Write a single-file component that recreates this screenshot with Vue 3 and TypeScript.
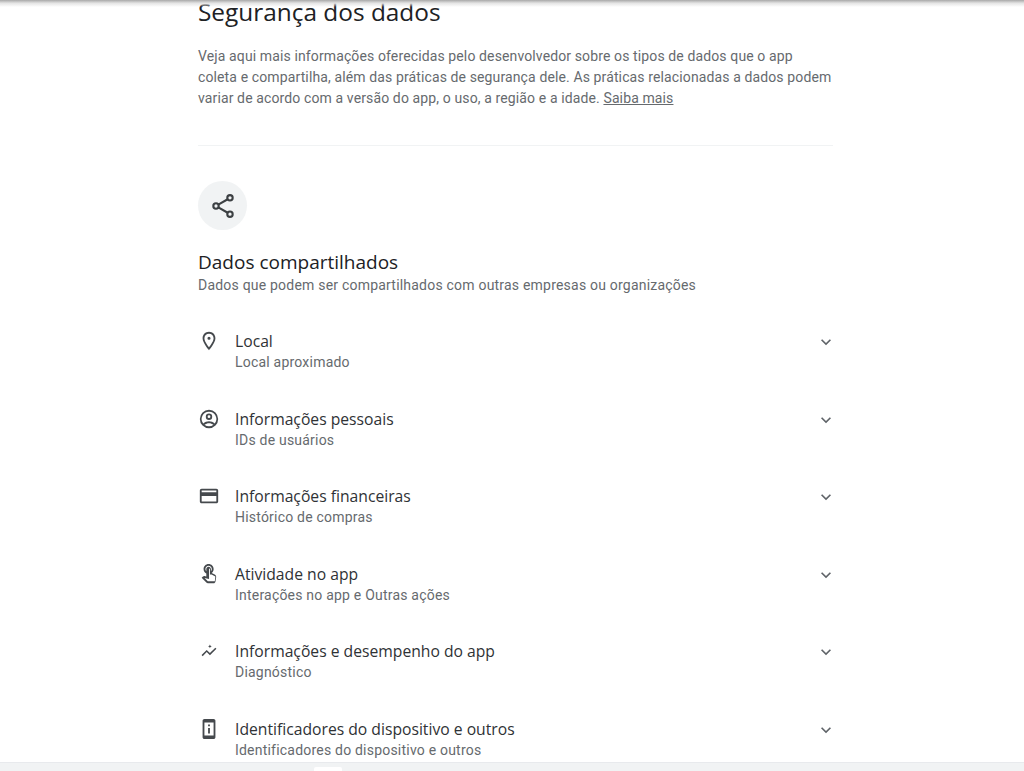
<template>
  <div class="page">
    <div class="top-shadow"></div>
    <section class="content">
      <h1>Segurança dos dados</h1>
      <p class="intro">
        Veja aqui mais informações oferecidas pelo desenvolvedor sobre os tipos de dados que o app
        coleta e compartilha, além das práticas de segurança dele. As práticas relacionadas a dados podem
        variar de acordo com a versão do app, o uso, a região e a idade. <a>Saiba mais</a>
      </p>
      <hr />
      <div class="share-badge">
        <svg width="28" height="28" viewBox="0 0 24 24" fill="none" stroke="#3c4043" stroke-width="1.800">
          <circle cx="18" cy="5" r="2.300" />
          <circle cx="6" cy="12" r="2.300" />
          <circle cx="18" cy="19" r="2.300" />
          <path d="M8 10.800 16 6.200M8 13.200 16 17.800" />
        </svg>
      </div>
      <h2>Dados compartilhados</h2>
      <p class="lead">Dados que podem ser compartilhados com outras empresas ou organizações</p>
      <ul class="rows">
        <li v-for="row in rows" :key="row.title" class="row">
          <svg class="icon" width="22" height="22" viewBox="0 0 24 24" fill="#45494d">
            <path :d="row.icon" />
          </svg>
          <div class="texts">
            <div class="title">{{ row.title }}</div>
            <div class="sub">{{ row.sub }}</div>
          </div>
          <svg class="chevron" width="20" height="20" viewBox="0 0 24 24" fill="#5f6368">
            <path d="M7.410 8.590 12 13.170l4.590-4.580L18 10l-6 6-6-6z" />
          </svg>
        </li>
      </ul>
    </section>
    <div class="bottom-bar"><span class="tab"></span></div>
  </div>
</template>

<script setup lang="ts">
interface Row {
  title: string;
  sub: string;
  icon: string;
}

const rows: Row[] = [
  {
    title: 'Local',
    sub: 'Local aproximado',
    icon: 'M12 2C8.100 2 5 5.100 5 9c0 5.200 7 13 7 13s7-7.800 7-13c0-3.900-3.100-7-7-7zm0 2c2.800 0 5 2.200 5 5 0 2.900-2.900 7.200-5 9.900C9.900 16.200 7 11.900 7 9c0-2.800 2.200-5 5-5zm0 3.300a1.700 1.700 0 1 0 0 3.400 1.700 1.700 0 0 0 0-3.400z',
  },
  {
    title: 'Informações pessoais',
    sub: 'IDs de usuários',
    icon: 'M12 2a10 10 0 1 0 0 20 10 10 0 0 0 0-20zm0 2a8 8 0 0 1 6.300 12.900C16.500 15.300 14.300 14.500 12 14.500s-4.500.8-6.300 2.400A8 8 0 0 1 12 4zm0 2a3.500 3.500 0 1 0 0 7 3.500 3.500 0 0 0 0-7zm0 2a1.500 1.500 0 1 1 0 3 1.500 1.500 0 0 1 0-3zm0 8.500c1.800 0 3.500.6 4.900 1.800A8 8 0 0 1 12 20a8 8 0 0 1-4.900-1.700c1.400-1.200 3.100-1.800 4.900-1.800z',
  },
  {
    title: 'Informações financeiras',
    sub: 'Histórico de compras',
    icon: 'M20 4H4c-1.100 0-2 .9-2 2v12c0 1.100.9 2 2 2h16c1.100 0 2-.9 2-2V6c0-1.100-.9-2-2-2zm0 14H4v-6h16v6zm0-10H4V6h16v2z',
  },
  {
    title: 'Atividade no app',
    sub: 'Interações no app e Outras ações',
    icon: 'M18.190 12.440l-3.240-1.620c1.290-1 2.120-2.560 2.120-4.320C17.070 3.470 14.600 1 11.570 1S6.070 3.470 6.070 6.500c0 2.130 1.220 3.980 3 4.890v3.260c-2.150-.46-2.020-.44-2.260-.44-.53 0-1.030.21-1.410.59L4 16.220l5.090 5.090C9.520 21.750 10.120 22 10.740 22h6.300c.98 0 1.810-.7 1.970-1.670l.8-4.710c.22-1.300-.43-2.580-1.620-3.180zm-.35 7.560h-7.100l-3.600-3.600 4.900 1.100V6.500c0-.28.22-.5.5-.5s.5.22.5.5v6h1.760l4.150 2.330-.61 5.170zM8.070 6.500c0-1.930 1.570-3.500 3.500-3.500s3.500 1.570 3.500 3.500c0 .95-.38 1.810-1 2.440V6.500c0-1.380-1.120-2.500-2.500-2.500s-2.500 1.120-2.500 2.500v2.440c-.62-.63-1-1.490-1-2.440z',
  },
  {
    title: 'Informações e desempenho do app',
    sub: 'Diagnóstico',
    icon: 'M3.900 16.400 9.500 10.800 13 14.300 18.900 8.400 20.100 9.600 13 16.700 9.500 13.200 5.100 17.600zM13 5l.6 1.400 1.400.6-1.400.6-.6 1.400-.6-1.400L11 7l1.400-.6z',
  },
  {
    title: 'Identificadores do dispositivo e outros',
    sub: 'Identificadores do dispositivo e outros',
    icon: 'M17 1.010 7 1c-1.100 0-2 .9-2 2v18c0 1.100.9 2 2 2h10c1.100 0 2-.9 2-2V3c0-1.100-.9-1.990-2-1.990zM17 19H7V5h10v14zm-4-8h-2v6h2zm0-4h-2v2h2z',
  },
];
</script>

<style>
html,
body {
  margin: 0;
  background: #fff;
  overflow: hidden;
}
</style>

<style scoped>
.page {
  position: relative;
  height: 771px;
  overflow: hidden;
  background: #fff;
  font-family: Roboto, "Liberation Sans", sans-serif;
}

.top-shadow {
  position: absolute;
  top: 0;
  left: 0;
  right: 0;
  height: 7px;
  background: linear-gradient(#a8a8a8, #e4e4e4 45%, rgba(255, 255, 255, 0));
}

.content {
  width: 635px;
  margin-left: 198px;
}

h1 {
  margin: 0;
  height: 46px;
  font-family: "Open Sans", sans-serif;
  font-size: 24.400px;
  font-weight: 500;
  line-height: 24px;
  color: #202124;
}

.intro {
  margin: 0;
  font-size: 14px;
  line-height: 21px;
  letter-spacing: 0.12px;
  color: #666a6e;
}

.intro a {
  text-decoration: underline;
}

hr {
  margin: 36px 0 35px;
  border: 0;
  border-top: 1px solid #f1f3f4;
}

.share-badge {
  display: flex;
  align-items: center;
  justify-content: center;
  width: 49px;
  height: 49px;
  border-radius: 50%;
  background: #f1f3f4;
}

h2 {
  margin: 20px 0 0;
  font-family: "Open Sans", sans-serif;
  font-size: 19px;
  font-weight: 500;
  line-height: 24px;
  color: #202124;
}

.lead {
  margin: 1px 0 0;
  font-size: 14px;
  line-height: 20px;
  letter-spacing: 0.21px;
  color: #666a6e;
}

.rows {
  margin: 36px 0 0;
  padding: 0;
  list-style: none;
}

.row {
  display: flex;
  align-items: flex-start;
  height: 77.500px;
}

.icon {
  flex: none;
  margin: -1px 15px 0 0;
}

.texts {
  flex: 1;
}

.title {
  font-family: "Open Sans", sans-serif;
  font-size: 15.700px;
  font-weight: 500;
  line-height: 20px;
  color: #2f3235;
}

.sub {
  margin-top: 1px;
  font-size: 14px;
  line-height: 21px;
  letter-spacing: 0.21px;
  color: #666a6e;
}

.chevron {
  flex: none;
  margin: 1px -3px 0 0;
}

.bottom-bar {
  position: absolute;
  left: 0;
  right: 0;
  bottom: 0;
  height: 9px;
  background: #f1f3f4;
  border-top: 1px solid #e8eaed;
  box-sizing: border-box;
}

.tab {
  position: absolute;
  left: 314px;
  top: 4px;
  width: 28px;
  height: 6px;
  background: #fff;
  border-radius: 2px 2px 0 0;
}
</style>
